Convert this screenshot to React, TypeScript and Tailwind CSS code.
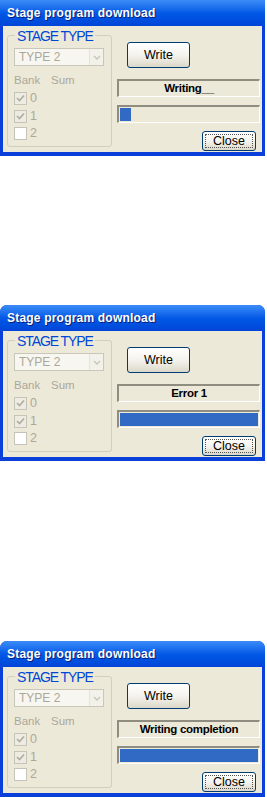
import React from 'react';

type DialogProps = {
  status: string;
  fill: number; // px width of the progress chunk
  rounded?: boolean;
};

const sans = { fontFamily: '"Liberation Sans", Arial, sans-serif' };

function Check({ on, label }: { on: boolean; label: string }) {
  return (
    <div className="flex items-center h-[13px]">
      <div className={`w-[13px] h-[13px] border border-[#c6c4b8] flex items-center justify-center ${on ? 'bg-[#eeece2]' : 'bg-white'}`}>
        {on && (
          <svg width="9" height="9" viewBox="0 0 9 9">
            <path d="M1 4 L3.5 6.5 L8 1.5" stroke="#aeac9e" strokeWidth="1.6" fill="none" />
          </svg>
        )}
      </div>
      <span className="ml-[3px] text-[12.5px] leading-[13px] text-[#aca899]">{label}</span>
    </div>
  );
}

function Dialog({ status, fill, rounded = true }: DialogProps) {
  return (
    <div className={`w-[265px] h-[156px] flex flex-col bg-[#0a3fd9] overflow-hidden shrink-0 ${rounded ? 'rounded-t-[7px]' : ''}`} style={sans}>
      <div className="h-[26px] shrink-0 flex items-center pl-[7px] bg-gradient-to-b from-[#3b8cf7] via-[#0259e6] to-[#0045d8]">
        <span className="text-white font-bold text-[12px] tracking-[0.2px] [text-shadow:1px_1px_0_#0a1e7a]">
          Stage program download
        </span>
      </div>
      <div className="flex-1 mx-[3px] mb-[4px] bg-[#ece9d8] flex">
        {/* group box */}
        <div className="relative ml-[4px] mt-[9px] w-[105px] h-[112px] border border-[#d0d0bf] rounded-[3px] shrink-0">
          <span className="absolute left-[7px] top-[-8px] px-[2px] bg-[#ece9d8] text-[14px] leading-[16px] tracking-[-1.1px] text-[#0046d5]">
            STAGE TYPE
          </span>
          <div className="ml-[6px] mt-[12px] w-[90px] h-[18px] border border-[#c9c7ba] bg-[#f7f6f0] flex items-center">
            <span className="flex-1 pl-[4px] text-[12px] text-[#aca899] leading-[16px]">TYPE 2</span>
            <div className="w-[14px] h-[16px] bg-[#f3f2ea] border-l border-[#e4e2d6] flex items-center justify-center">
              <svg width="8" height="5" viewBox="0 0 8 5">
                <path d="M1 1 L4 4 L7 1" stroke="#c9c7ba" strokeWidth="1.5" fill="none" />
              </svg>
            </div>
          </div>
          <div className="ml-[6px] mt-[7px] flex text-[11.5px] leading-[14px] text-[#aca899]">
            <span className="w-[37px]">Bank</span>
            <span>Sum</span>
          </div>
          <div className="ml-[6px] mt-[5px] flex flex-col gap-[4.5px]">
            <Check on label="0" />
            <Check on label="1" />
            <Check on={false} label="2" />
          </div>
        </div>
        {/* right column */}
        <div className="ml-[5px] w-[143px] flex flex-col">
          <div className="ml-[10px] mt-[16px] w-[63px] h-[26px] rounded-[3px] border border-[#003c74] bg-gradient-to-b from-[#ffffff] via-[#f4f3ee] to-[#dcd8c8] flex items-center justify-center text-[12.5px] text-black">
            Write
          </div>
          <div className="mt-[11px] h-[18px] border-t-2 border-l-2 border-t-[#8f8c80] border-l-[#8f8c80] border-b border-r border-b-white border-r-white flex items-center justify-center">
            <span className="text-[11.5px] font-bold tracking-[-0.3px] text-black leading-none">{status}</span>
          </div>
          <div className="mt-[8px] h-[18px] border-t-2 border-l-2 border-t-[#8f8c80] border-l-[#8f8c80] border-b border-r border-b-white border-r-white p-[1px] flex">
            <div className="h-full bg-[#316ac5]" style={{ width: fill }} />
          </div>
          <div className="mt-[8px] self-end mr-[4px] w-[54px] h-[20px] rounded-[3px] border border-[#003c74] bg-gradient-to-b from-[#ffffff] via-[#f4f3ee] to-[#dcd8c8] p-[2px]">
            <div className="w-full h-full border border-dotted border-[#555] flex items-center justify-center text-[12.5px] text-black leading-none">
              Close
            </div>
          </div>
        </div>
      </div>
    </div>
  );
}

export default function App() {
  return (
    <div className="w-[267px] h-[797px] bg-white flex flex-col overflow-hidden">
      <Dialog status="Writing__" fill={11} rounded={false} />
      <div className="mt-[149px]">
        <Dialog status="Error 1" fill={138} />
      </div>
      <div className="mt-[180px]">
        <Dialog status="Writing completion" fill={138} />
      </div>
    </div>
  );
}
